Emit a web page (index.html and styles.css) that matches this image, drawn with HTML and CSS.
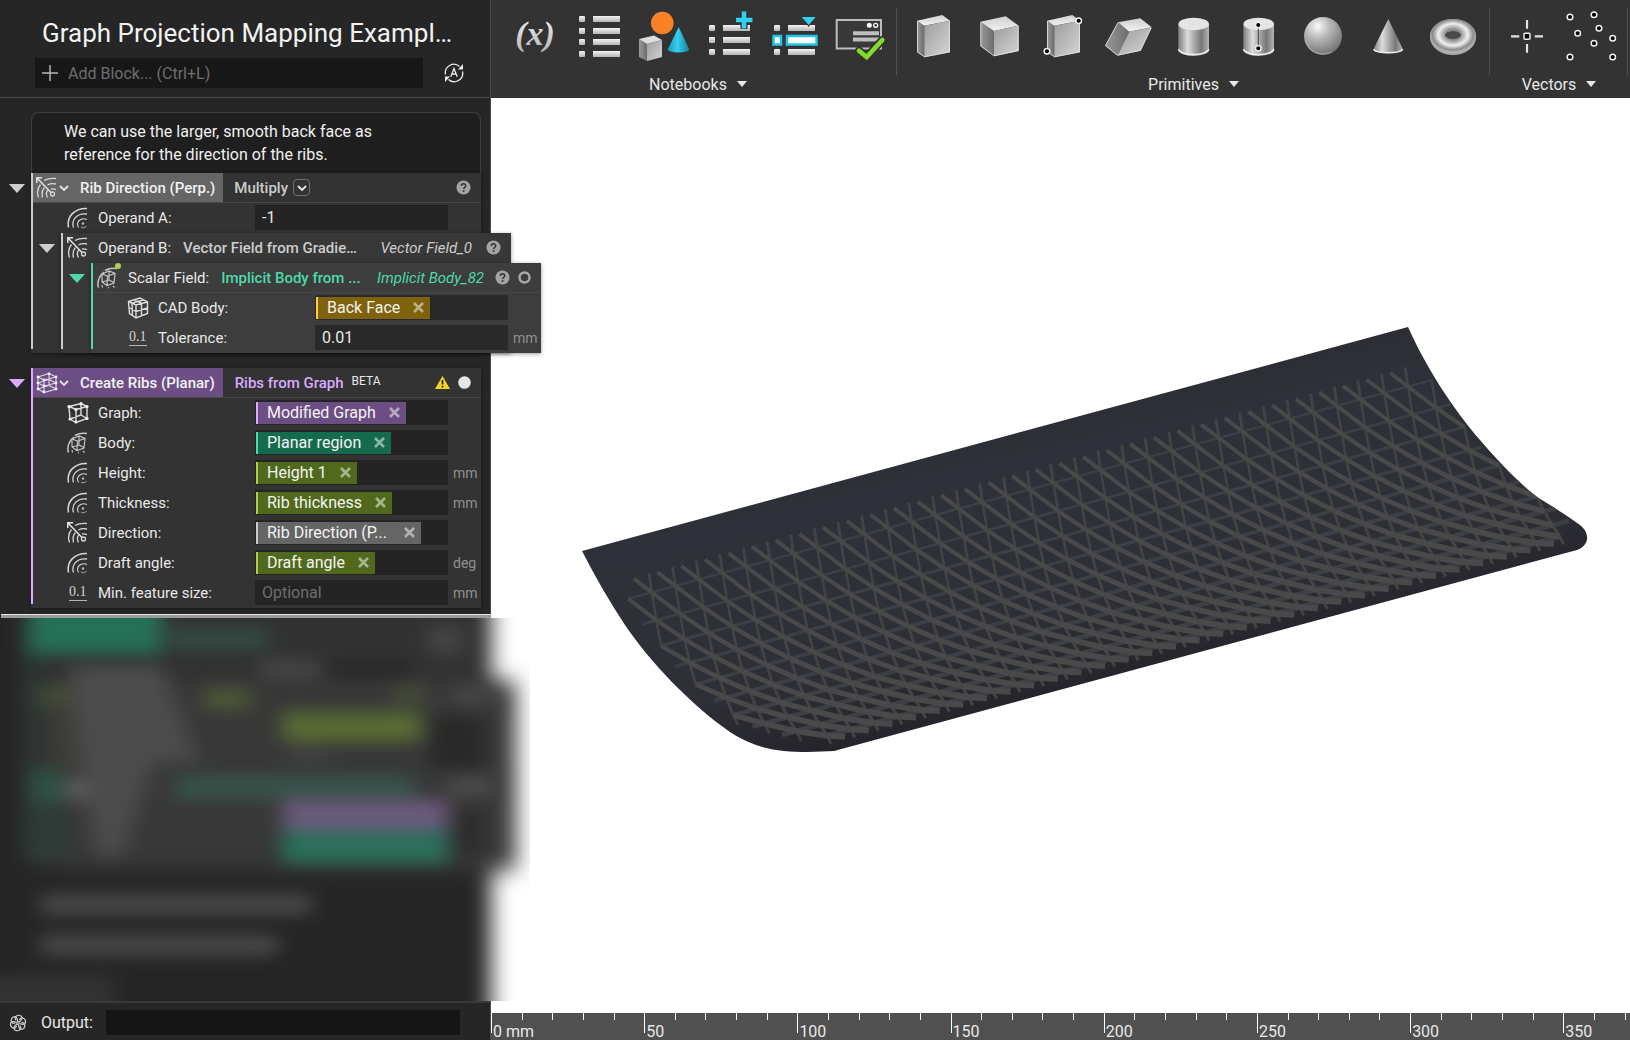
FILE: index.html
```html
<!DOCTYPE html>
<html lang="en">
<head>
  <meta charset="UTF-8" />
  <title>Graph Projection Mapping Example</title>
  <link rel="stylesheet" href="styles.css">
</head>
<body>
  <svg class="defs" width="0" height="0" aria-hidden="true">
    <defs>
      <linearGradient id="g-face" x1="0" y1="0" x2="1" y2="1"><stop offset="0" stop-color="#9c9c9c"/><stop offset="1" stop-color="#d6d6d6"/></linearGradient>
      <linearGradient id="g-side" x1="0" y1="0" x2="1" y2="0"><stop offset="0" stop-color="#9a9a9a"/><stop offset="1" stop-color="#6c6c6c"/></linearGradient>
      <linearGradient id="g-top" x1="0" y1="0" x2="0" y2="1"><stop offset="0" stop-color="#cfcfcf"/><stop offset="1" stop-color="#f2f2f2"/></linearGradient>
      <linearGradient id="g-cyl" x1="0" y1="0" x2="1" y2="0"><stop offset="0" stop-color="#7d7d7d"/><stop offset=".3" stop-color="#dcdcdc"/><stop offset=".75" stop-color="#777"/><stop offset="1" stop-color="#b5b5b5"/></linearGradient>
      <linearGradient id="g-list" x1="0" y1="0" x2="0" y2="1"><stop offset="0" stop-color="#f4f4f4"/><stop offset="1" stop-color="#b4b4b4"/></linearGradient>
      <linearGradient id="g-blue" x1="0" y1="0" x2="1" y2="0"><stop offset="0" stop-color="#1e95b4"/><stop offset=".45" stop-color="#35d0f0"/><stop offset="1" stop-color="#14809c"/></linearGradient>
      <radialGradient id="g-ball" cx=".36" cy=".25" r=".8"><stop offset="0" stop-color="#fafafa"/><stop offset=".4" stop-color="#b8b8b8"/><stop offset="1" stop-color="#6e6e6e"/></radialGradient>
      <radialGradient id="g-torus" cx=".5" cy=".46" r=".52"><stop offset=".3" stop-color="#8a8a8a"/><stop offset=".62" stop-color="#efefef"/><stop offset=".85" stop-color="#8c8c8c"/><stop offset="1" stop-color="#b5b5b5"/></radialGradient>

      <symbol id="scalar" viewBox="0 0 22 22">
        <g fill="none" stroke="#d6d6d6" stroke-width="1.5">
          <path d="M1.500 20.500C-.5 10 7 1 20 1.500"/>
          <path d="M6.500 20.500C4 13 10 5.500 20 7" stroke-width="1.300"/>
          <path d="M11.500 20.500C8.500 15 13.500 10 20 12.500" stroke-width="1.100"/>
        </g>
        <circle cx="16" cy="16.500" r="1.200" fill="#bbb"/>
        <path d="M14 20c2 1.500 4.500.5 5.500-1" fill="none" stroke="#aaa"/>
      </symbol>
      <symbol id="vector" viewBox="0 0 22 22">
        <g fill="none" stroke="#d6d6d6" stroke-width="1.300">
          <path d="M2.500 20.500C1 16 1.500 11 4.500 7.500M8 3.500c3.500-2 7.500-2.500 12-2"/>
          <path d="M6.500 20.500C5.500 16 6 13 8.500 10.500M11.500 8c2.500-1.500 5-1.800 8.500-1"/>
          <path d="M11.500 20.500C9.500 17 10.500 14 12 13M15 12c2-.5 3.500 0 5 .7"/>
          <path d="M1 1l14.500 15M.8 6V.8H6" stroke="#e2e2e2" stroke-width="1.500"/>
          <circle cx="16.500" cy="17" r="2"/>
        </g>
      </symbol>
      <symbol id="implicit" viewBox="0 0 22 22">
        <g fill="none" stroke="#c4c4c4" stroke-width="1.200">
          <path d="M1.500 20.500C-.5 14 3 8 7 5M8 3.500C12 1 16 .8 20 1.500" stroke-width="1.500"/>
          <path d="M5 7l7-3 6 2.500-1 9.500-7 2.500-5-3.500zM5 7l5.500 2 7.500-2.500M10.500 9L10 18.500M12 4v9l-7 2M12 13l5 2.500"/>
          <path d="M5.500 20.500L5 18M11 20.500l1 .5M16 19l1.500 1.500"/>
        </g>
      </symbol>
      <symbol id="cube" viewBox="0 0 22 22">
        <path d="M2 4.500L14 1.500L20 4.500V16.500L9 20.500L3 17zM2 4.500L9 7.500L20 4.500M9 7.500V20.500M14 1.500V13L3 17M14 13L20 16.500" fill="none" stroke="#dedede" stroke-width="1.400"/>
        <g fill="#f0f0f0"><circle cx="2" cy="4.500" r="1.600"/><circle cx="14" cy="1.700" r="1.600"/><circle cx="20" cy="4.500" r="1.600"/><circle cx="9" cy="7.500" r="1.600"/><circle cx="9" cy="20" r="1.600"/><circle cx="3" cy="17" r="1.600"/><circle cx="20" cy="16.500" r="1.600"/></g>
      </symbol>
      <symbol id="ribs" viewBox="0 0 22 22">
        <path d="M2 5L13 1.500L20 5V17L8 20.500L2 17zM2 5L8 8L20 5M8 8V20.500M13 1.500V13.500M2 11L8 14L20 11M2 11L13 7.500L20 11M2 17L13 13.500L20 17" fill="none" stroke="#d8d0dd" stroke-width="1.200"/>
        <g fill="#f0f0f0"><circle cx="2" cy="5" r="1.400"/><circle cx="13" cy="1.800" r="1.400"/><circle cx="20" cy="5" r="1.400"/><circle cx="8" cy="8" r="1.400"/><circle cx="8" cy="14" r="1.400"/><circle cx="20" cy="11" r="1.400"/><circle cx="2" cy="11" r="1.400"/><circle cx="8" cy="20" r="1.400"/><circle cx="20" cy="17" r="1.400"/><circle cx="2" cy="17" r="1.400"/></g>
      </symbol>
      <symbol id="cad" viewBox="0 0 22 22">
        <path d="M1.500 4.500L13 1L20.500 5V16.500L9 21L2.500 16.500zM1.500 4.500L9 8L20.500 5M9 8V21M5 6.200L5.500 18.500M14.500 6.500V19M2 10.500L9 14.500L20.500 11M7 2.800L15 6.500M5 6.200L16.500 3" fill="none" stroke="#dcdcdc" stroke-width="1.400"/>
      </symbol>
      <symbol id="help" viewBox="0 0 16 16">
        <circle cx="8" cy="8" r="7.500" fill="#a3a3a3"/>
        <path d="M5.700 6.300c0-3 4.700-3 4.700-.2 0 1.700-2.300 1.700-2.300 3.600" fill="none" stroke="#333" stroke-width="1.600"/>
        <rect x="7.200" y="10.800" width="1.800" height="1.800" fill="#333"/>
      </symbol>
      <symbol id="close" viewBox="0 0 11 11"><path d="M1 1l9 9M10 1l-9 9" stroke="#fff" stroke-opacity=".5" stroke-width="2.600"/></symbol>
      <symbol id="chevron" viewBox="0 0 10 6"><path d="M1 1l4 4 4-4" fill="none" stroke="#e6e6e6" stroke-width="1.800"/></symbol>
      <symbol id="triangle" viewBox="0 0 18 10"><path d="M0 0h18L9 10z" fill="currentColor"/></symbol>
      <symbol id="box" viewBox="0 0 65 72">
        <path d="M16 20.700L23.300 25.700V57.300L16 52.300z" fill="url(#g-side)"/>
        <path d="M16 20.700L41.300 15 49 20.700 23.300 25.700z" fill="url(#g-top)"/>
        <path d="M23.300 25.700L49 20.700V52.300L23.300 57.300z" fill="url(#g-face)"/>
        <path d="M16.500 21v31l7 4.800L48.500 52V21" fill="none" stroke="#e4e4e4" stroke-opacity=".8"/>
      </symbol>
      <symbol id="cylinder" viewBox="0 0 65 72">
        <path d="M17.300 24v26a15.300 6 0 0 0 30.700 0V24z" fill="url(#g-cyl)"/>
        <path d="M17.500 49a15.200 6 0 0 0 30.300 0" fill="none" stroke="#ededed" stroke-width="1.500"/>
        <ellipse cx="32.700" cy="24" rx="15.300" ry="6.200" fill="#e4e4e4"/>
      </symbol>
      <symbol id="dot" viewBox="0 0 8 8"><circle cx="4" cy="4" r="2.800" fill="#000" stroke="#f0f0f0" stroke-width="1.500"/></symbol>
    </defs>
  </svg>

  <div class="app">
    <aside class="sidebar">
      <header class="notebook-head">
        <h1>Graph Projection Mapping Exampl…</h1>
        <div class="add-row">
          <label class="add-block">
            <svg width="16" height="16" viewBox="0 0 16 16"><path d="M8 0v16M0 8h16" stroke="#b5b5b5" stroke-width="1.500"/></svg>
            <input type="text" placeholder="Add Block... (Ctrl+L)" aria-label="Add block">
          </label>
          <button class="icon-btn" aria-label="Auto run">
            <svg width="20" height="20" viewBox="0 0 20 20" fill="none" stroke="#ececec" stroke-width="1.300"><path d="M1.500 11.500A8.500 8.500 0 0 1 15.500 3.500M18.500 8.500A8.500 8.500 0 0 1 4.500 16.500"/><path d="M19 1v5.500h-5zM1 19v-5.500h5z" fill="#ececec" stroke="none"/><path d="M6.800 13.800L10 5.500l3.200 8.300M8 11h4"/></svg>
          </button>
        </div>
      </header>

      <main class="blocks">
        <p class="comment">We can use the larger, smooth back face as<br>reference for the direction of the ribs.</p>

        <section class="node">
          <button class="caret" aria-label="Collapse Rib Direction"><svg width="18" height="9"><use href="#triangle"/></svg></button>
          <div class="block vector">
            <div class="block-head lined">
              <div class="title"><svg width="22" height="22"><use href="#vector"/></svg><svg width="10" height="6"><use href="#chevron"/></svg><b>Rib Direction (Perp.)</b></div>
              <label class="select"><select aria-label="Operation"><option>Multiply</option></select><span class="select-arrow"><svg width="10" height="6"><use href="#chevron"/></svg></span></label>
              <span class="status"><svg width="15" height="15"><use href="#help"/></svg></span>
            </div>
            <div class="row">
              <svg width="22" height="22"><use href="#scalar"/></svg>
              <label for="operand-a">Operand A:</label>
              <input class="field" id="operand-a" type="text" value="-1">
            </div>

            <section class="node">
              <button class="caret" aria-label="Collapse Operand B"><svg width="18" height="9"><use href="#triangle"/></svg></button>
              <div class="block vector">
                <div class="block-head">
                  <svg width="22" height="22"><use href="#vector"/></svg>
                  <span class="head-label">Operand B:</span>
                  <b class="type">Vector Field from Gradie…</b>
                  <i class="instance">Vector Field_0</i>
                  <span class="status"><svg width="15" height="15"><use href="#help"/></svg></span>
                </div>

                <section class="node">
                  <button class="caret teal" aria-label="Collapse Scalar Field"><svg width="18" height="9"><use href="#triangle"/></svg></button>
                  <div class="block implicit">
                    <div class="block-head lined">
                      <span class="with-dot"><svg width="22" height="22"><use href="#implicit"/></svg></span>
                      <span class="head-label">Scalar Field:</span>
                      <b class="type">Implicit Body from ...</b>
                      <i class="instance">Implicit Body_82</i>
                      <span class="status"><svg width="15" height="15"><use href="#help"/></svg><svg width="13" height="13" viewBox="0 0 13 13"><circle cx="6.500" cy="6.500" r="5" fill="none" stroke="#a8a8a8" stroke-width="2.400"/></svg></span>
                    </div>
                    <div class="row">
                      <svg width="22" height="22"><use href="#cad"/></svg>
                      <span class="name">CAD Body:</span>
                      <div class="field"><span class="tag gold">Back Face<button aria-label="Remove Back Face"><svg width="11" height="11"><use href="#close"/></svg></button></span></div>
                    </div>
                    <div class="row">
                      <span class="real">0.1</span>
                      <label for="tolerance">Tolerance:</label>
                      <input class="field" id="tolerance" type="text" value="0.01">
                      <span class="unit">mm</span>
                    </div>
                  </div>
                </section>
              </div>
            </section>
          </div>
        </section>

        <section class="node second">
          <button class="caret purple" aria-label="Collapse Create Ribs"><svg width="18" height="9"><use href="#triangle"/></svg></button>
          <div class="block ribs">
            <div class="block-head lined">
              <div class="title"><svg width="22" height="22"><use href="#ribs"/></svg><svg width="10" height="6"><use href="#chevron"/></svg><b>Create Ribs (Planar)</b></div>
              <b class="kind">Ribs from Graph</b>
              <small>BETA</small>
              <span class="status">
                <svg width="15" height="13" viewBox="0 0 15 13"><path d="M7.500 0L15 13H0z" fill="#f2d422"/><path d="M7.500 4v4.500M7.500 9.800v1.700" stroke="#222" stroke-width="1.700"/></svg>
                <svg width="13" height="13" viewBox="0 0 13 13"><circle cx="6.500" cy="6.500" r="6.300" fill="#e6e6e6"/></svg>
              </span>
            </div>
            <div class="row">
              <svg width="22" height="22"><use href="#cube"/></svg>
              <span class="name">Graph:</span>
              <div class="field"><span class="tag violet">Modified Graph<button aria-label="Remove Modified Graph"><svg width="11" height="11"><use href="#close"/></svg></button></span></div>
            </div>
            <div class="row">
              <svg width="22" height="22"><use href="#implicit"/></svg>
              <span class="name">Body:</span>
              <div class="field"><span class="tag green">Planar region<button aria-label="Remove Planar region"><svg width="11" height="11"><use href="#close"/></svg></button></span></div>
            </div>
            <div class="row">
              <svg width="22" height="22"><use href="#scalar"/></svg>
              <span class="name">Height:</span>
              <div class="field"><span class="tag olive">Height 1<button aria-label="Remove Height 1"><svg width="11" height="11"><use href="#close"/></svg></button></span></div>
              <span class="unit">mm</span>
            </div>
            <div class="row">
              <svg width="22" height="22"><use href="#scalar"/></svg>
              <span class="name">Thickness:</span>
              <div class="field"><span class="tag olive">Rib thickness<button aria-label="Remove Rib thickness"><svg width="11" height="11"><use href="#close"/></svg></button></span></div>
              <span class="unit">mm</span>
            </div>
            <div class="row">
              <svg width="22" height="22"><use href="#vector"/></svg>
              <span class="name">Direction:</span>
              <div class="field"><span class="tag gray">Rib Direction (P...<button aria-label="Remove Rib Direction"><svg width="11" height="11"><use href="#close"/></svg></button></span></div>
            </div>
            <div class="row">
              <svg width="22" height="22"><use href="#scalar"/></svg>
              <span class="name">Draft angle:</span>
              <div class="field"><span class="tag olive">Draft angle<button aria-label="Remove Draft angle"><svg width="11" height="11"><use href="#close"/></svg></button></span></div>
              <span class="unit">deg</span>
            </div>
            <div class="row">
              <span class="real">0.1</span>
              <label for="feature-size">Min. feature size:</label>
              <input class="field" id="feature-size" type="text" placeholder="Optional">
              <span class="unit">mm</span>
            </div>
          </div>
        </section>
      </main>

      <!-- blurred preview of the blocks further down -->
      <div class="preview">
        <svg viewBox="0 0 530 384" preserveAspectRatio="none" aria-hidden="true">
          <defs>
            <filter id="soft" filterUnits="userSpaceOnUse" x="-60" y="-60" width="660" height="510" color-interpolation-filters="sRGB"><feGaussianBlur stdDeviation="11"/></filter>
            <filter id="soft-small" filterUnits="userSpaceOnUse" x="-60" y="-60" width="660" height="510" color-interpolation-filters="sRGB"><feGaussianBlur stdDeviation="10 8"/></filter>
          </defs>
          <g filter="url(#soft)">
            <rect x="-60" y="-60" width="660" height="510" fill="#fff"/>
            <rect x="-60" y="-60" width="551" height="510" fill="#252525"/>
            <rect x="31" y="-60" width="450" height="310" fill="#323232"/>
            <rect x="61" y="63" width="455" height="190" fill="#383838"/>
          </g>
          <g filter="url(#soft-small)">
            <rect x="24" y="-30" width="14" height="275" fill="#2c3a35"/>
            <rect x="29" y="-50" width="133" height="86" fill="#267058"/>
            <rect x="170" y="10" width="98" height="22" fill="#334b41"/>
            <rect x="428" y="8" width="34" height="28" fill="#464646"/>
            <path d="M70 48h92l36 96h-44l-32 95H96L80 150z" fill="#4c4c4c"/>
            <rect x="260" y="42" width="60" height="20" fill="#454545"/>
            <rect x="330" y="44" width="80" height="14" fill="#282828"/>
            <rect x="40" y="68" width="30" height="20" fill="#464e38"/>
            <rect x="48" y="90" width="26" height="60" fill="#3c3c37"/>
            <rect x="204" y="70" width="46" height="22" fill="#4d5736"/>
            <rect x="392" y="68" width="34" height="18" fill="#454c39"/>
            <rect x="452" y="70" width="40" height="16" fill="#484848"/>
            <rect x="430" y="98" width="54" height="54" fill="#292929"/>
            <rect x="282" y="94" width="140" height="30" fill="#596b34"/>
            <rect x="292" y="130" width="34" height="14" fill="#444"/>
            <rect x="32" y="152" width="32" height="34" fill="#2f5144"/>
            <rect x="66" y="162" width="20" height="20" fill="#606060"/>
            <rect x="175" y="158" width="240" height="24" fill="#38524a"/>
            <rect x="448" y="158" width="46" height="20" fill="#4b4b4b"/>
            <rect x="34" y="188" width="36" height="55" fill="#303c38"/>
            <rect x="282" y="212" width="166" height="34" fill="#2b705a"/>
            <rect x="282" y="182" width="166" height="31" fill="#6a597b"/>
            <rect x="458" y="192" width="22" height="44" fill="#2a2a2a"/>
            <rect x="40" y="276" width="272" height="22" fill="#474747"/>
            <rect x="40" y="317" width="238" height="22" fill="#474747"/>
            <rect x="-20" y="358" width="135" height="40" fill="#333"/>
          </g>
        </svg>
      </div>

      <footer class="output">
        <svg width="18" height="20" viewBox="-10 -10 20 20" fill="none" stroke="#d0d0d0" stroke-width="1.300">
          <g id="petals"><path d="M-2-3C-5-6-1-10 3-8 6-6 4-2 0-1"/><path d="M-2-3C-5-6-1-10 3-8 6-6 4-2 0-1" transform="rotate(60)"/><path d="M-2-3C-5-6-1-10 3-8 6-6 4-2 0-1" transform="rotate(120)"/></g>
          <use href="#petals" transform="rotate(180)"/>
        </svg>
        <label for="output">Output:</label>
        <input id="output" type="text">
      </footer>
    </aside>

    <div class="workspace">
      <nav class="toolbar">
        <div class="group">
          <div class="tools">
            <button aria-label="Variable"><svg viewBox="0 0 65 72"><text x="32" y="45" text-anchor="middle" class="var" fill="url(#g-list)">(x)</text></svg></button>
            <button aria-label="List"><svg viewBox="0 0 65 72"><g fill="url(#g-list)"><rect x="11" y="16" width="6" height="6" rx="1"/><rect x="11" y="28" width="6" height="6" rx="1"/><rect x="11" y="39" width="6" height="6" rx="1"/><rect x="11" y="51" width="6" height="6" rx="1"/><rect x="25" y="16" width="27" height="6"/><rect x="25" y="28" width="27" height="6"/><rect x="25" y="39" width="27" height="6"/><rect x="25" y="51" width="27" height="6"/></g></svg></button>
            <button aria-label="Shapes"><svg viewBox="0 0 65 72"><circle cx="29.300" cy="23" r="11.300" fill="#fb8128"/><path d="M6 39l8 5v17l-8-4z" fill="url(#g-side)"/><path d="M6 39l15-3.500 8 4.500-15 4z" fill="#dedede"/><path d="M14 44l15-4v17l-15 4z" fill="url(#g-face)"/><path d="M45.700 27L34.700 49.500a10.800 3 0 0 0 21.600 0z" fill="url(#g-blue)"/></svg></button>
            <button aria-label="Add to list"><svg viewBox="0 0 65 72"><g fill="url(#g-list)"><rect x="11" y="25" width="6" height="6" rx="1"/><rect x="11" y="37" width="6" height="6" rx="1"/><rect x="11" y="49" width="6" height="6" rx="1"/><rect x="25" y="25" width="27" height="6"/><rect x="25" y="37" width="27" height="6"/><rect x="25" y="49" width="27" height="6"/></g><path d="M46 11v18M37.500 20h17" stroke="#333" stroke-width="7"/><path d="M46 11.500v17M38 20h16.500" stroke="#2fd0f0" stroke-width="4.500"/></svg></button>
            <button aria-label="List item"><svg viewBox="0 0 65 72"><g fill="url(#g-list)"><rect x="11" y="25" width="6" height="6" rx="1"/><rect x="11" y="49" width="6" height="6" rx="1"/><rect x="25" y="25" width="27" height="6"/><rect x="25" y="49" width="27" height="6"/></g><g fill="#fff" stroke="#22c4ea" stroke-width="2.500"><rect x="10.500" y="36" width="7.500" height="8.500"/><rect x="24" y="36" width="29.500" height="8.500"/></g><path d="M37 15.500h17.500L45.700 27z" fill="#333"/><path d="M38.700 17h14l-7 8z" fill="#2fd0f0"/></svg></button>
            <button aria-label="Checked window"><svg viewBox="0 0 65 72"><rect x="8.700" y="20" width="44.300" height="28.500" fill="#393939" stroke="#bdbdbd" stroke-width="2"/><path d="M25 33.300h26M25 39.500h26" stroke="#bdbdbd" stroke-width="4"/><circle cx="41.300" cy="25.300" r="2.500" fill="#fff"/><circle cx="47.700" cy="25.300" r="2" fill="none" stroke="#fff" stroke-width="1.300"/><path d="M31 50.700l7.700 6.300 15.600-17" fill="none" stroke="#333" stroke-width="8" stroke-linecap="round"/><path d="M31 50.700l7.700 6.300 15.600-17" fill="none" stroke="#80dd2c" stroke-width="4.600" stroke-linecap="round"/></svg></button>
          </div>
          <button class="group-name">Notebooks<svg width="10" height="6" viewBox="0 0 18 10" preserveAspectRatio="none"><use href="#triangle"/></svg></button>
        </div>

        <div class="group">
          <div class="tools">
            <button aria-label="Box"><svg viewBox="0 0 65 72"><use href="#box"/></svg></button>
            <button aria-label="Cube"><svg viewBox="0 0 65 72"><path d="M14.300 21.700L28 31v25.300L14.300 46.300z" fill="url(#g-side)"/><path d="M14.300 21.700l25.400-5.400 13 9.400L28 31z" fill="url(#g-top)"/><path d="M28 31l24.700-5.300V51L28 56.300z" fill="url(#g-face)"/><path d="M14.800 22v24L28 55.800l24.200-5.200V26" fill="none" stroke="#e4e4e4" stroke-opacity=".8"/></svg></button>
            <button aria-label="Box from corners"><svg viewBox="0 0 65 72"><use href="#box"/><use href="#dot" x="43.700" y="16.700" width="8" height="8"/><use href="#dot" x="12" y="47.300" width="8" height="8"/></svg></button>
            <button aria-label="Parallelepiped"><svg viewBox="0 0 65 72"><path d="M22 22.300l11.300 9.400-12 24L9 45.700z" fill="url(#g-side)"/><path d="M22 22.300l22.300-4 11.400 9-22.400 4.400z" fill="url(#g-top)"/><path d="M33.300 31.700l22.400-4.400-11 23.400-23.400 5z" fill="url(#g-face)"/><path d="M22 22.500L9.500 45.500l12 9.700 23-4.900L55.200 28" fill="none" stroke="#e4e4e4" stroke-opacity=".8"/></svg></button>
            <button aria-label="Cylinder"><svg viewBox="0 0 65 72"><use href="#cylinder"/></svg></button>
            <button aria-label="Cylinder from points"><svg viewBox="0 0 65 72"><use href="#cylinder"/><path d="M32.300 28v18" stroke="#444"/><use href="#dot" x="28.300" y="21" width="8" height="8"/><use href="#dot" x="28.300" y="44.300" width="8" height="8"/></svg></button>
            <button aria-label="Sphere"><svg viewBox="0 0 65 72"><circle cx="32" cy="36" r="19" fill="url(#g-ball)"/><path d="M14.500 40a18 18 0 0 0 26 12" fill="none" stroke="#d0d0d0" stroke-opacity=".6"/></svg></button>
            <button aria-label="Cone"><svg viewBox="0 0 65 72"><path d="M32.300 19l-15 30.500a15 4.500 0 0 0 29.700 0z" fill="url(#g-cyl)"/><path d="M17.500 49.500a15 4 0 0 0 29.300 0" fill="none" stroke="#eee" stroke-width="1.500"/></svg></button>
            <button aria-label="Torus"><svg viewBox="0 0 65 72"><ellipse cx="32" cy="37" rx="23" ry="18" fill="#a9a9a9"/><ellipse cx="32" cy="36" rx="23" ry="17" fill="url(#g-torus)"/><ellipse cx="32" cy="35" rx="8" ry="4" fill="#4a4a4a"/><path d="M24 34.500a8 4 0 0 1 16 0" fill="none" stroke="#888"/></svg></button>
          </div>
          <button class="group-name">Primitives<svg width="10" height="6" viewBox="0 0 18 10" preserveAspectRatio="none"><use href="#triangle"/></svg></button>
        </div>

        <div class="group">
          <div class="tools">
            <button aria-label="Point"><svg viewBox="0 0 65 72"><path d="M33 20v8.700M33 44v8.700M17 36.300h8.300M40.700 36.300H49" stroke="#e2e2e2" stroke-width="2.200"/><rect x="30" y="33.300" width="6" height="6" rx="1" fill="#000" stroke="#eee" stroke-width="1.500"/></svg></button>
            <button aria-label="Point list"><svg viewBox="0 0 65 72"><use href="#dot" x="7" y="13" width="8" height="8"/><use href="#dot" x="31" y="10.700" width="8" height="8"/><use href="#dot" x="36" y="24.300" width="8" height="8"/><use href="#dot" x="14.700" y="29.300" width="8" height="8"/><use href="#dot" x="49.700" y="34.300" width="8" height="8"/><use href="#dot" x="31" y="39.300" width="8" height="8"/><use href="#dot" x="7" y="53" width="8" height="8"/><use href="#dot" x="49.700" y="53" width="8" height="8"/></svg></button>
          </div>
          <button class="group-name">Vectors<svg width="10" height="6" viewBox="0 0 18 10" preserveAspectRatio="none"><use href="#triangle"/></svg></button>
        </div>
      </nav>

      <div class="viewport">
        <svg id="model" viewBox="491 98 1139 915" role="img" aria-label="Panel with ribs">
          <defs>
            <linearGradient id="surface" gradientUnits="userSpaceOnUse" x1="960" y1="430" x2="1022" y2="700">
              <stop offset="0" stop-color="#2c2e33"/><stop offset=".15" stop-color="#2e3139"/><stop offset=".75" stop-color="#2e2f36"/><stop offset="1" stop-color="#25252b"/>
            </linearGradient>
            <path id="outline" d="M582 551L1408 327C1430 376 1460 417 1480 440S1515 479 1537 497Q1562 512 1580 525C1590 533 1590 545 1577 550L834 751C815 752 780 754 756 745Q742 740 730 732C690 704 650 662 625 625Q603 592 582 551z"/>
            <clipPath id="inside"><use href="#outline"/></clipPath>
          </defs>
          <use href="#outline" fill="url(#surface)"/>
          <g clip-path="url(#inside)">
            <g id="rows" stroke="#3c3f43"></g>
            <g id="steep" stroke="#434343" stroke-width="2.500"></g>
            <g id="diagonals" stroke="#494949"></g>
          </g>
        </svg>
      </div>
      <div class="ruler" id="ruler"></div>
    </div>
  </div>
  <script src="app.js"></script>
</body>
</html>
```
FILE: styles.css
```css
* {
  box-sizing: border-box;
}
body {
  margin: 0;
  font-family: Roboto, "Liberation Sans", sans-serif;
  font-size: 16px;
  color: #e8e8e8;
  background: #fff;
  overflow: hidden;
}
button, input, select {
  font: inherit;
  color: inherit;
  border: 0;
  margin: 0;
  padding: 0;
  background: none;
  outline: none;
}
button {
  cursor: pointer;
}
svg {
  display: block;
  flex-shrink: 0;
}
.defs {
  position: absolute;
}
.app {
  display: grid;
  grid-template-columns: 491px 1fr;
  grid-template-rows: minmax(0, 1fr);
  height: 100vh;
}

/* sidebar */
.sidebar {
  position: relative;
  z-index: 1;
  display: flex;
  flex-direction: column;
  min-height: 0;
  background: #262626;
  border-right: 1px solid #4a4a4a;
}
.notebook-head {
  padding: 14px 24px 9px 35px;
  border-bottom: 1px solid #4a4a4a;
}
h1 {
  margin: 0 0 6px;
  padding-left: 7px;
  font-size: 26px;
  font-weight: 400;
  line-height: 38px;
  color: #f2f2f2;
  white-space: nowrap;
}
.add-row {
  display: flex;
  align-items: center;
  justify-content: space-between;
}
.add-block {
  display: flex;
  align-items: center;
  gap: 10px;
  width: 388px;
  height: 30px;
  padding: 0 7px;
  background: #171717;
}
.add-block input {
  flex: 1;
}
::placeholder {
  color: #6e6e6e;
  opacity: 1;
}
.icon-btn {
  padding: 0 2px;
}
.blocks {
  padding: 14px 0 0 1px;
}
.comment {
  width: 450px;
  margin: 0 0 0 30px;
  padding: 7px 32px;
  border: 1px solid #3e3e3e;
  border-bottom: 0;
  border-radius: 8px 8px 0 0;
  background: #1f1f1f;
  line-height: 23px;
  color: #f0f0f0;
}
.node {
  display: flex;
  align-items: flex-start;
}
.second {
  margin-top: 15px;
}
.caret {
  flex: 0 0 30px;
  height: 30px;
  padding-left: 7px;
  color: #ccc;
}
.teal {
  color: #4cd9ac;
}
.purple {
  color: #d9aaff;
}
.block {
  --bar: #ccc;
  --title: #656565;
  flex: 0 0 450px;
  min-width: 0;
  background: linear-gradient(var(--bar), var(--bar)) 0 0 / 2px calc(100% - 4px) no-repeat #333;
  box-shadow: 0 1px 4px rgba(0, 0, 0, .4);
  font-size: 15px;
}
.block .block {
  background-color: #383838;
}
.block .block .block {
  background-color: #3d3d3d;
}
.block.implicit {
  --bar: #4cd9ac;
}
.block.ribs {
  --bar: #d9aaff;
  --title: #6d4e84;
}
.block-head {
  display: flex;
  align-items: center;
  height: 30px;
  margin-left: 2px;
  padding: 0 10px 1px 4px;
  white-space: nowrap;
}
.lined {
  padding-bottom: 0;
  border-bottom: 1px solid #484848;
}
.title {
  display: flex;
  align-items: center;
  gap: 1px;
  align-self: stretch;
  margin-left: -4px;
  padding: 0 8px 0 3px;
  background: var(--title);
}
b {
  font-weight: 500;
}
.title b {
  margin-left: 10px;
  color: #f2f2f2;
}
.select {
  display: flex;
  align-items: center;
  margin-left: 11px;
}
.select select {
  width: 59px;
  appearance: none;
  font-weight: 500;
  color: #ccc;
}
.select-arrow {
  display: grid;
  place-items: center;
  width: 17px;
  height: 17px;
  border: 1px solid #707070;
  border-radius: 4px;
}
.status {
  display: flex;
  align-items: center;
  gap: 8px;
  margin-left: auto;
}
.head-label {
  margin-left: 9px;
}
.type, .kind {
  margin-left: 12px;
  color: #ccc;
}
.instance {
  margin-left: auto;
  color: #ccc;
}
.instance + .status {
  margin-left: 14px;
}
.implicit .type, .implicit .instance {
  color: #4cd9ac;
}
.implicit .instance + .status {
  margin-left: 11px;
}
.ribs .kind {
  color: #d9aaff;
}
small {
  margin: 0 0 4px 8px;
  font-size: 12px;
}
.with-dot {
  position: relative;
}
.with-dot::after {
  content: "";
  position: absolute;
  top: -4px;
  right: -2px;
  width: 6px;
  height: 6px;
  border-radius: 50%;
  background: #b0cf50;
}
.row {
  display: grid;
  grid-template-columns: 22px 148px 193px 1fr;
  column-gap: 9px;
  align-items: center;
  height: 30px;
  padding: 0 0 1px 36px;
}
.field {
  display: flex;
  align-items: center;
  width: 193px;
  height: 25px;
  padding: 0 1px;
  background: #242424;
  font-size: 16px;
}
.block .block .field {
  background: #292929;
}
input.field {
  padding: 0 7px;
}
.unit {
  margin-left: -4px;
  font-size: 14px;
  color: #909090;
}
.real {
  justify-self: center;
  width: 18px;
  border-bottom: 1px solid #b5b5b5;
  font: 14px/16px "Liberation Serif", serif;
  color: #d2d2d2;
}
.tag {
  display: flex;
  align-items: center;
  justify-content: space-between;
  gap: 13px;
  height: 22px;
  padding: 0 6px 0 9px;
  border-left: 2px solid;
  color: #f4f4f4;
  white-space: nowrap;
}
.gold {
  background: #80620c;
  border-color: #ffcb3d;
}
.violet {
  background: #6d4e84;
  border-color: #d9aaff;
}
.green {
  background: #156b4e;
  border-color: #4cd9ac;
}
.olive {
  background: #50691c;
  border-color: #b0cf50;
}
.gray {
  width: 165px;
  background: #656565;
  border-color: #ccc;
}

/* blurred area runs past the sidebar edge */
.preview {
  position: relative;
  flex: 1;
  min-height: 0;
  width: 530px;
  margin-top: 6px;
}
.preview::before {
  content: "";
  position: absolute;
  top: 0;
  left: 1px;
  width: 490px;
  height: 3px;
  border-top: 1px solid #e4e4e4;
  background: #9a9a9a;
}
.preview svg {
  width: 100%;
  height: 100%;
  padding-top: 4px;
  overflow: hidden;
}
.output {
  display: flex;
  align-items: center;
  height: 39px;
  padding: 2px 30px 0 9px;
  border-top: 2px solid #3a3a3a;
}
.output label {
  width: 65px;
  margin-left: 14px;
}
.output input {
  flex: 1;
  height: 25px;
  background: #151515;
}

/* toolbar */
.workspace {
  display: flex;
  flex-direction: column;
  min-width: 0;
  min-height: 0;
}
.toolbar {
  display: flex;
  height: 98px;
  padding-left: 8px;
  background: #333;
}
.group {
  padding: 0 4px;
  background: linear-gradient(#505050, #505050) right 8px / 1px 67px no-repeat;
}
.tools {
  display: flex;
}
.tools button {
  width: 65px;
  height: 72px;
}
.var {
  font: italic bold 34px "Liberation Serif", serif;
}
.group-name {
  display: flex;
  align-items: center;
  gap: 10px;
  height: 24px;
  margin: 0 auto;
}
.viewport {
  flex: 1;
  min-height: 0;
}
.viewport svg {
  width: 100%;
  height: 100%;
}
.ruler {
  display: flex;
  height: 27px;
  overflow: hidden;
  background: #505050;
}
.major {
  display: flex;
  flex: 0 0 13.45%;
  position: relative;
  border-left: 1px solid #fff;
  height: 20px;
  justify-content: space-evenly;
}
.major i {
  width: 1px;
  height: 7px;
  background: #fff;
}
.major span {
  position: absolute;
  left: 1px;
  top: 9px;
  line-height: 20px;
}
```
FILE: app.js
```js
const NS = 'http://www.w3.org/2000/svg';

// rib lattice: every row is the first one moved along the curved profile
const origin = [651.7, 592.3];
const step = [23.63, -6.43];
const profile = [[0, 0], [4.7, 28], [9.3, 53.3], [14.3, 76.7], [20.3, 98.3], [27, 118], [34.3, 135.7], [41.7, 150.5], [50, 164.5], [57.3, 175.7]];
const first = [-1, -0.6, 0, 0.4, 1, 1.5, 2, 2.5, 3.4, 5];
const last = [33, 33.6, 34, 34.5, 35, 35.6, 36, 36.5, 36.7, 36];

function point(row, k) {
  return [origin[0] + step[0] * k + profile[row][0], origin[1] + step[1] * k + profile[row][1]];
}

function line(group, a, b, width) {
  const el = document.createElementNS(NS, 'path');
  el.setAttribute('d', `M${a[0].toFixed(1)} ${a[1].toFixed(1)}L${b[0].toFixed(1)} ${b[1].toFixed(1)}`);
  if (width) el.setAttribute('stroke-width', width);
  document.getElementById(group).appendChild(el);
}

for (let r = 0; r < profile.length; r++) {
  line('rows', point(r, first[r]), point(r, last[r]), 2.5 + r * 0.3);
  for (let k = Math.ceil(first[r]); k <= last[r]; k++) {
    const p = point(r, k);
    if (r === 0 && k >= 0 && k < 33) {
      line('steep', p, [p[0] - 2.7, p[1] - 19], 3);
      line('diagonals', p, [p[0] - 17.7, p[1] - 13.5], 4);
    }
    if (r === 9) {
      line('steep', p, [p[0] + 4, p[1] + 8], 3);
      if (k < 36) line('diagonals', p, [p[0] + 18, p[1] + 1], 6);
      continue;
    }
    if (k >= first[r + 1] && k <= last[r + 1]) line('steep', p, point(r + 1, k), 2.5 + r * 0.1);
    if (k + 1 >= first[r + 1] && k + 1 <= last[r + 1]) line('diagonals', p, point(r + 1, k + 1), 4 + r * 0.25);
    // short overhang where the row below starts later
    if (k < first[r + 1] && r > 5) line('steep', p, [p[0] + 5, p[1] + 10]);
  }
}

const ruler = document.getElementById('ruler');
for (let mm = 0; mm <= 350; mm += 50) {
  const cell = document.createElement('div');
  cell.className = 'major';
  cell.innerHTML = `<i></i><i></i><i></i><i></i><span>${mm}${mm ? '' : '&nbsp;mm'}</span>`;
  ruler.appendChild(cell);
}
```
